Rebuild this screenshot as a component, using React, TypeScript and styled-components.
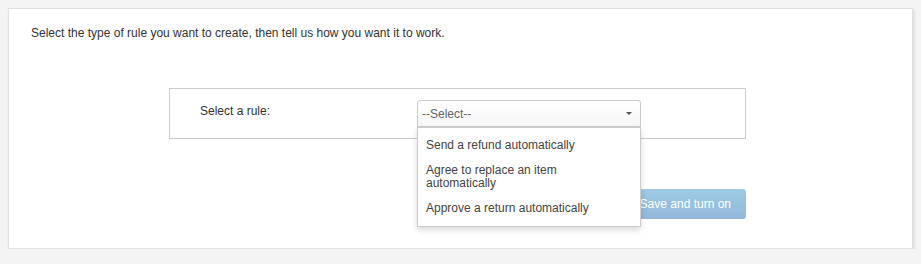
import React from 'react';
import styled, { createGlobalStyle } from 'styled-components';

const GlobalStyle = createGlobalStyle`
  body {
    margin: 0;
    background: #f4f4f4;
    font-family: "Liberation Sans", Arial, sans-serif;
    font-size: 12px;
    color: #333;
  }
`;

const Card = styled.div`
  box-sizing: border-box;
  margin: 8px 0 0 8px;
  width: 905px;
  height: 241px;
  padding: 16px 22px 0 22px;
  background: #fff;
  border: 1px solid #e2e2e2;
  box-shadow: 1px 2px 3px rgba(0, 0, 0, 0.12);
`;

const Intro = styled.p`
  margin: 0;
  line-height: 16px;
`;

const Form = styled.div`
  width: 577px;
  margin: 47px 0 0 138px;
`;

const RuleBox = styled.div`
  display: flex;
  align-items: flex-start;
  padding: 11px 0 11px 30px;
  border: 1px solid #ccc;
`;

const Label = styled.label`
  width: 217px;
  padding-top: 4px;
  line-height: 14px;
`;

const SelectWrap = styled.div`
  position: relative;
  width: 224px;
  z-index: 2;
`;

const SelectBox = styled.div`
  box-sizing: border-box;
  display: flex;
  align-items: center;
  justify-content: space-between;
  height: 27px;
  padding: 0 8px 0 4px;
  border: 1px solid #ccc;
  border-radius: 3px 3px 0 0;
  background: linear-gradient(#fff, #f6f6f6);
  color: #666;
  font-size: 12px;
`;

const Caret = styled.span`
  width: 0;
  height: 0;
  border-left: 3px solid transparent;
  border-right: 3px solid transparent;
  border-top: 3px solid #555;
`;

const Menu = styled.ul`
  position: absolute;
  top: 100%;
  left: 0;
  box-sizing: border-box;
  width: 224px;
  margin: 0;
  padding: 5px 0;
  list-style: none;
  background: #fff;
  border: 1px solid #ccc;
  box-shadow: 0 3px 6px rgba(0, 0, 0, 0.15);
`;

const MenuItem = styled.li`
  padding: 6px 24px 6px 8px;
  line-height: 13px;
  color: #444;
`;

const Footer = styled.div`
  display: flex;
  justify-content: flex-end;
  margin-top: 50px;
`;

const SaveButton = styled.button`
  height: 30px;
  padding: 0 15px;
  border: none;
  border-radius: 3px;
  background: linear-gradient(#9dcbe6, #93b6d8);
  color: #fff;
  font-family: "Liberation Sans", Arial, sans-serif;
  font-size: 12px;
  cursor: default;
`;

const options = [
  'Send a refund automatically',
  'Agree to replace an item automatically',
  'Approve a return automatically',
];

const App = () => {
  return (
    <>
      <GlobalStyle />
      <Card>
        <Intro>Select the type of rule you want to create, then tell us how you want it to work.</Intro>
        <Form>
          <RuleBox>
            <Label>Select a rule:</Label>
            <SelectWrap>
              <SelectBox>
                --Select--
                <Caret />
              </SelectBox>
              <Menu>
                {options.map((o) => (
                  <MenuItem key={o}>{o}</MenuItem>
                ))}
              </Menu>
            </SelectWrap>
          </RuleBox>
          <Footer>
            <SaveButton disabled>Save and turn on</SaveButton>
          </Footer>
        </Form>
      </Card>
    </>
  );
};

export default App;
